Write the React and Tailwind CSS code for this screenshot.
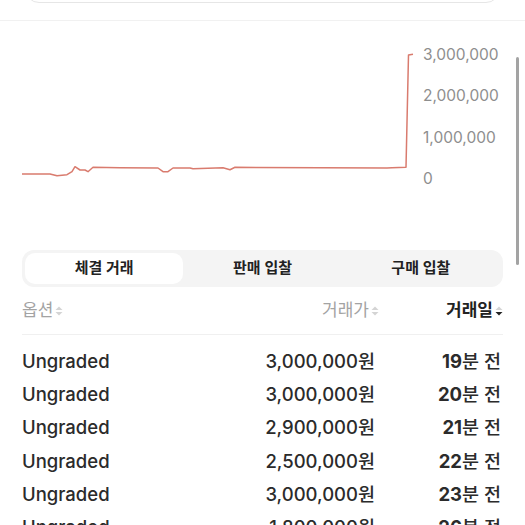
import React from 'react';

const font = { fontFamily: "Inter, 'Noto Sans CJK KR', 'Noto Sans', sans-serif" };

const rows = [
    { price: '3,000,000', mins: 19 },
    { price: '3,000,000', mins: 20 },
    { price: '2,900,000', mins: 21 },
    { price: '2,500,000', mins: 22 },
    { price: '3,000,000', mins: 23 },
    { price: '1,800,000', mins: 26 },
];

const points = [
    [22, 174], [50, 174], [57, 175.7], [67, 174.7], [72, 171.7], [75, 166.7], [80, 170], [85, 170],
    [88, 171.7], [93, 167.3], [120, 167.7], [158, 168], [163, 171.7], [168, 171.7], [173, 168],
    [190, 168], [193, 168.7], [223, 167.7], [230, 169.7], [235, 167.3], [387, 168], [392, 167.7],
    [406, 167.3], [408.5, 55], [413, 54.3],
];

function SortIcon({ active }) {
    return (
        <svg width="8" height="12" viewBox="0 0 8 12" className="ml-[2px]">
            <path d="M4 1.5 L7.5 5 L0.5 5 Z" fill="#d4d4d4" />
            <path d="M0.5 7 L7.5 7 L4 10.5 Z" fill={active ? '#222' : '#d4d4d4'} />
        </svg>
    );
}

function PriceChart() {
    const labels = [['3,000,000', 54], ['2,000,000', 95], ['1,000,000', 137], ['0', 178]];
    return (
        <svg width="525" height="229" viewBox="0 21 525 229" className="block">
            <polyline
                points={points.map((p) => p.join(',')).join(' ')}
                fill="none"
                stroke="#d97b6e"
                strokeWidth="1.5"
                strokeLinejoin="round"
            />
            {labels.map(([t, y]) => (
                <text key={t} x="423" y={y + 5.5} fontSize="15.5" fill="#8e8e8e" style={font}>{t}</text>
            ))}
        </svg>
    );
}

export default function App() {
    return (
        <div className="relative h-[525px] w-[525px] overflow-hidden bg-white" style={font}>
            <div className="h-[21px] overflow-hidden border-b border-[#f1f1f1]">
                <div className="mx-[25px] -mt-[37px] h-[40px] rounded-[14px] border border-[#e6e6e6]" />
            </div>

            <PriceChart />

            <div className="mx-[22px] grid h-[37px] grid-cols-3 rounded-[12px] bg-[#f4f4f4] p-[3px]">
                <div className="flex items-center justify-center rounded-[10px] bg-white text-[15px] font-semibold text-[#222]">체결 거래</div>
                <div className="flex items-center justify-center text-[15px] font-semibold text-[#222]">판매 입찰</div>
                <div className="flex items-center justify-center text-[15px] font-semibold text-[#222]">구매 입찰</div>
            </div>

            <div className="mx-[22px] grid h-[48px] grid-cols-[1fr_auto_124px] items-center border-b border-[#f0f0f0] text-[17px]">
                <div className="flex items-center text-[#a3a3a3]">옵션<SortIcon /></div>
                <div className="flex items-center justify-end text-[#a3a3a3]">거래가<SortIcon /></div>
                <div className="flex items-center justify-end font-bold text-[#222]">거래일<SortIcon active /></div>
            </div>

            <div className="mx-[22px] pt-[10px]">
                {rows.map((r, i) => (
                    <div key={i} className="grid h-[33.3px] grid-cols-[1fr_auto_124px] items-center pr-[2px] text-[18.5px] font-medium text-[#2b2b2b]">
                        <span>Ungraded</span>
                        <span className="pr-[2px] text-right">{r.price}원</span>
                        <span className="text-right"><span className="font-bold">{r.mins}</span>분 전</span>
                    </div>
                ))}
            </div>

            <div className="absolute right-[6px] top-[57px] h-[208px] w-[3px] rounded-full bg-[#a3a3a3]" />
        </div>
    );
}
